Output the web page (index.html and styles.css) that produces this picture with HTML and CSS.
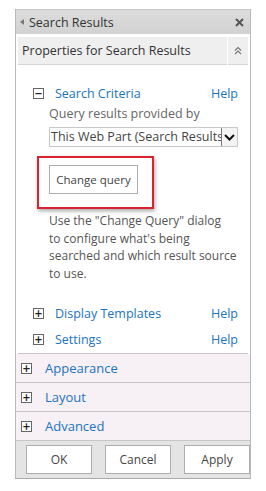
FILE: index.html
```html
<!DOCTYPE html>
<html>
<head>
<meta charset="utf-8">
<link rel="stylesheet" href="styles.css">
</head>
<body>
<div class="panel">
  <div class="titlebar">
    <span class="tri"></span>
    <span class="title">Search Results</span>
    <svg class="close" width="9" height="9" viewBox="0 0 9 9"><path d="M1 1L8 8M8 1L1 8" stroke="#555" stroke-width="2"/></svg>
  </div>
  <div class="propsbar">
    <div class="propshead">Properties for Search Results</div>
    <div class="collapse">
      <svg width="8" height="9" viewBox="0 0 8 9"><path d="M1 4.5L4 1.5L7 4.5M1 8L4 5L7 8" fill="none" stroke="#777" stroke-width="1.2"/></svg>
    </div>
  </div>
  <div class="body">
    <div class="grouprow first">
      <span class="box">&minus;</span>
      <span class="link">Search Criteria</span>
      <span class="help">Help</span>
    </div>
    <div class="inner">
      <div class="label">Query results provided by</div>
      <div class="select">
        <span class="seltext">This Web Part (Search Results)</span>
        <span class="arrow"><svg width="11" height="7" viewBox="0 0 11 7"><path d="M1 1L5.5 5.5L10 1" fill="none" stroke="#111" stroke-width="2"/></svg></span>
      </div>
      <div class="highlight">
        <button class="btn change">Change query</button>
      </div>
      <p class="desc">Use the "Change Query" dialog<br>to configure what's being<br>searched and which result source<br>to use.</p>
    </div>
    <div class="grouprow dt">
      <span class="box">+</span>
      <span class="link">Display Templates</span>
      <span class="help">Help</span>
    </div>
    <div class="grouprow st">
      <span class="box">+</span>
      <span class="link">Settings</span>
      <span class="help">Help</span>
    </div>
  </div>
  <div class="acc">
    <div class="accrow"><span class="box">+</span><span class="link">Appearance</span></div>
    <div class="accrow"><span class="box">+</span><span class="link">Layout</span></div>
    <div class="accrow"><span class="box">+</span><span class="link">Advanced</span></div>
  </div>
  <div class="footer">
    <button class="btn fbtn">OK</button>
    <button class="btn fbtn">Cancel</button>
    <button class="btn fbtn">Apply</button>
  </div>
</div>
</body>
</html>
```
FILE: styles.css
```css
html, body {
  margin: 0;
  padding: 0;
  background: #fff;
}
body {
  font-family: "Open Sans", "Noto Sans", sans-serif;
  color: #444;
}
.panel {
  margin: 9px 0 0 15px;
  width: 234px;
  border-left: 1px solid #b9b9b9;
  border-right: 1px solid #b9b9b9;
  border-bottom: 1px solid #a9a9a9;
}
.titlebar {
  height: 24px;
  background: linear-gradient(#dcdcdc, #d2d2d2);
  display: flex;
  align-items: center;
  padding: 0 5px 0 4px;
  border-top: 1px solid #c8c8c8;
}
.tri {
  width: 0;
  height: 0;
  border-top: 3.5px solid transparent;
  border-bottom: 3.5px solid transparent;
  border-right: 4px solid #777;
  margin-right: 5px;
}
.title {
  font-size: 12.5px;
  color: #333;
  flex: 1;
}
.close {
  margin-right: 1px;
}
.propsbar {
  display: flex;
  gap: 1px;
  padding: 3px 2px 0 2px;
}
.propshead {
  flex: 1;
  height: 27px;
  background: #efefef;
  border-bottom: 1px solid #d4d4d4;
  font-size: 12.5px;
  color: #333;
  display: flex;
  align-items: center;
  padding-left: 4px;
}
.collapse {
  width: 20px;
  height: 27px;
  background: #efefef;
  border-bottom: 1px solid #d4d4d4;
  display: flex;
  align-items: center;
  justify-content: center;
}
.body {
  padding: 0 10px 4px 15px;
  border-bottom: 1px solid #c6c6c6;
  margin: 0 2px;
}
.grouprow {
  height: 20px;
  display: flex;
  align-items: center;
  font-size: 12.5px;
}
.grouprow.first { margin-top: 18px; }
.grouprow.dt { margin-top: 21px; }
.grouprow.st { margin-top: 6px; }
.box {
  width: 9px;
  height: 9px;
  border: 1px solid #666;
  font-size: 10px;
  line-height: 9px;
  text-align: center;
  color: #222;
  font-family: "DejaVu Sans", sans-serif;
  font-weight: bold;
  flex: none;
  background: #fff;
}
.grouprow .box { margin-right: 11px; }
.link {
  color: #1a74c0;
  flex: 1;
}
.help {
  color: #1a74c0;
}
.inner {
  padding-left: 16px;
}
.label {
  margin-top: 2px;
  font-size: 12.5px;
  color: #666;
  line-height: 18px;
}
.select {
  margin-top: 4px;
  height: 18px;
  border: 1px solid #c8c8c8;
  display: flex;
  align-items: stretch;
  overflow: hidden;
  background: #fff;
}
.seltext {
  flex: 1;
  font-size: 12.5px;
  color: #444;
  white-space: nowrap;
  overflow: hidden;
  padding-left: 1px;
  line-height: 18px;
}
.arrow {
  width: 15px;
  border: 1px solid #7a7a7a;
  margin: -1px -1px -1px 0;
  display: flex;
  align-items: center;
  justify-content: center;
  background: #f4f4f4;
}
.highlight {
  margin: 9px 0 0 -12px;
  width: 103px;
  height: 42px;
  border: 2px solid #d9232e;
  box-shadow: 1px 2px 4px rgba(0,0,0,0.35);
  padding: 7px 0 0 10px;
}
.btn {
  font-family: "Open Sans", "Noto Sans", sans-serif;
  background: #fff;
  border: 1px solid #adadad;
  color: #444;
  font-size: 11.5px;
  padding: 0;
}
.change {
  width: 89px;
  height: 29px;
}
.desc {
  margin: 3px 0 0 0;
  font-size: 12px;
  line-height: 17.5px;
  color: #555;
  white-space: nowrap;
}
.accrow {
  height: 28px;
  background: #f7f0f4;
  border-bottom: 1px solid #c6c6c6;
  display: flex;
  align-items: center;
  padding-left: 5px;
  font-size: 13px;
}
.accrow .box {
  margin-right: 13px;
}
.footer {
  height: 37px;
  background: #e4e4e4;
  display: flex;
  align-items: center;
  padding-left: 10px;
  gap: 13px;
}
.fbtn {
  width: 66px;
  height: 29px;
  font-size: 12px;
}
```
